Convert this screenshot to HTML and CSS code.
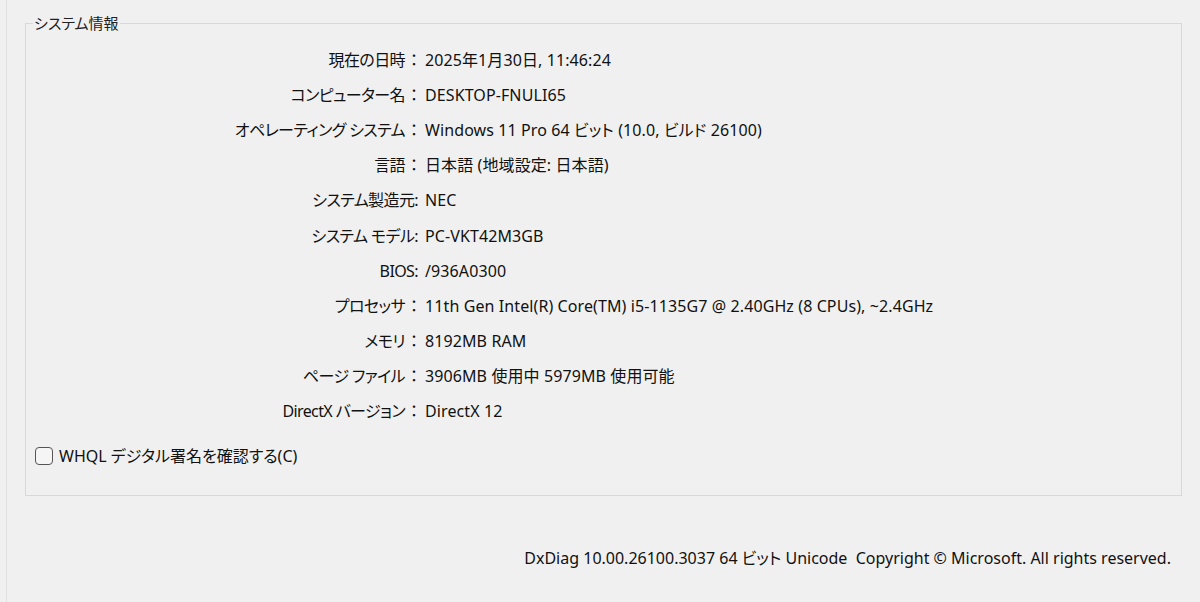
FILE: index.html
```html
<!DOCTYPE html>
<html lang="ja">
<head>
<meta charset="utf-8">
<title>DirectX 診断ツール</title>
<link rel="stylesheet" href="styles.css">
</head>
<body>
<div class="window">
  <fieldset class="group">
    <legend class="group-title">システム情報</legend>
    <div class="info">
      <div class="label">現在の日時<span class="colon">：</span></div><div class="value">2025年1月30日, 11:46:24</div>
      <div class="label">コンピューター名<span class="colon">：</span></div><div class="value">DESKTOP-FNULI65</div>
      <div class="label">オペレーティング システム<span class="colon">：</span></div><div class="value">Windows 11 Pro 64 ビット (10.0, ビルド 26100)</div>
      <div class="label">言語<span class="colon">：</span></div><div class="value">日本語 (地域設定: 日本語)</div>
      <div class="label">システム製造元:</div><div class="value">NEC</div>
      <div class="label">システム モデル:</div><div class="value">PC-VKT42M3GB</div>
      <div class="label">BIOS:</div><div class="value">/936A0300</div>
      <div class="label">プロセッサ<span class="colon">：</span></div><div class="value">11th Gen Intel(R) Core(TM) i5-1135G7 @ 2.40GHz (8 CPUs), ~2.4GHz</div>
      <div class="label">メモリ<span class="colon">：</span></div><div class="value">8192MB RAM</div>
      <div class="label">ページ ファイル<span class="colon">：</span></div><div class="value">3906MB 使用中 5979MB 使用可能</div>
      <div class="label">DirectX バージョン<span class="colon">：</span></div><div class="value">DirectX 12</div>
    </div>
    <label class="check">
      <input type="checkbox" class="check-box">
      <span class="check-text">WHQL デジタル署名を確認する(C)</span>
    </label>
  </fieldset>
  <div class="footer">DxDiag 10.00.26100.3037 64 ビット Unicode&nbsp; Copyright © Microsoft. All rights reserved.</div>
</div>
</body>
</html>
```
FILE: styles.css
```css
html, body {
  margin: 0;
  padding: 0;
  background: #f0f0f0;
}
body {
  font-family: "Noto Sans", "Noto Sans CJK JP", sans-serif;
  font-feature-settings: "palt";
  color: #111;
  width: 1200px;
  height: 602px;
  overflow: hidden;
}
.window {
  margin-left: 6px;
  border-left: 1px solid #e1e1e1;
  height: 602px;
  box-sizing: border-box;
  padding-left: 18px;
  padding-right: 18px;
  padding-top: 12px;
}
.group {
  margin: 0;
  padding: 0 0 28px 0;
  border: 1px solid #d8d8d8;
  min-width: 0;
}
.group-title {
  margin-left: 7px;
  padding: 0 1px;
  font-size: 15px;
  line-height: 22px;
  color: #222;
}
.info {
  display: grid;
  grid-template-columns: 392px 1fr;
  column-gap: 7px;
  grid-auto-rows: 35.2px;
  align-items: center;
  padding-top: 8px;
  font-size: 16px;
  line-height: 22px;
}
.label {
  text-align: right;
  white-space: nowrap;
  letter-spacing: -0.6px;
}
.colon {
  letter-spacing: 0;
  padding-left: 5px;
}
.value {
  white-space: nowrap;
  letter-spacing: 0.1px;
}
.check {
  display: flex;
  align-items: center;
  gap: 6px;
  margin-top: 16px;
  padding-left: 9px;
  font-size: 16px;
  line-height: 22px;
}
.check-box {
  appearance: none;
  -webkit-appearance: none;
  margin: 0;
  width: 18px;
  height: 18px;
  border: 1px solid #555;
  border-radius: 4px;
  background: #f5f5f5;
  box-sizing: border-box;
}
.footer {
  margin-top: 52px;
  text-align: right;
  padding-right: 11px;
  font-size: 16px;
  line-height: 20px;
}
```
